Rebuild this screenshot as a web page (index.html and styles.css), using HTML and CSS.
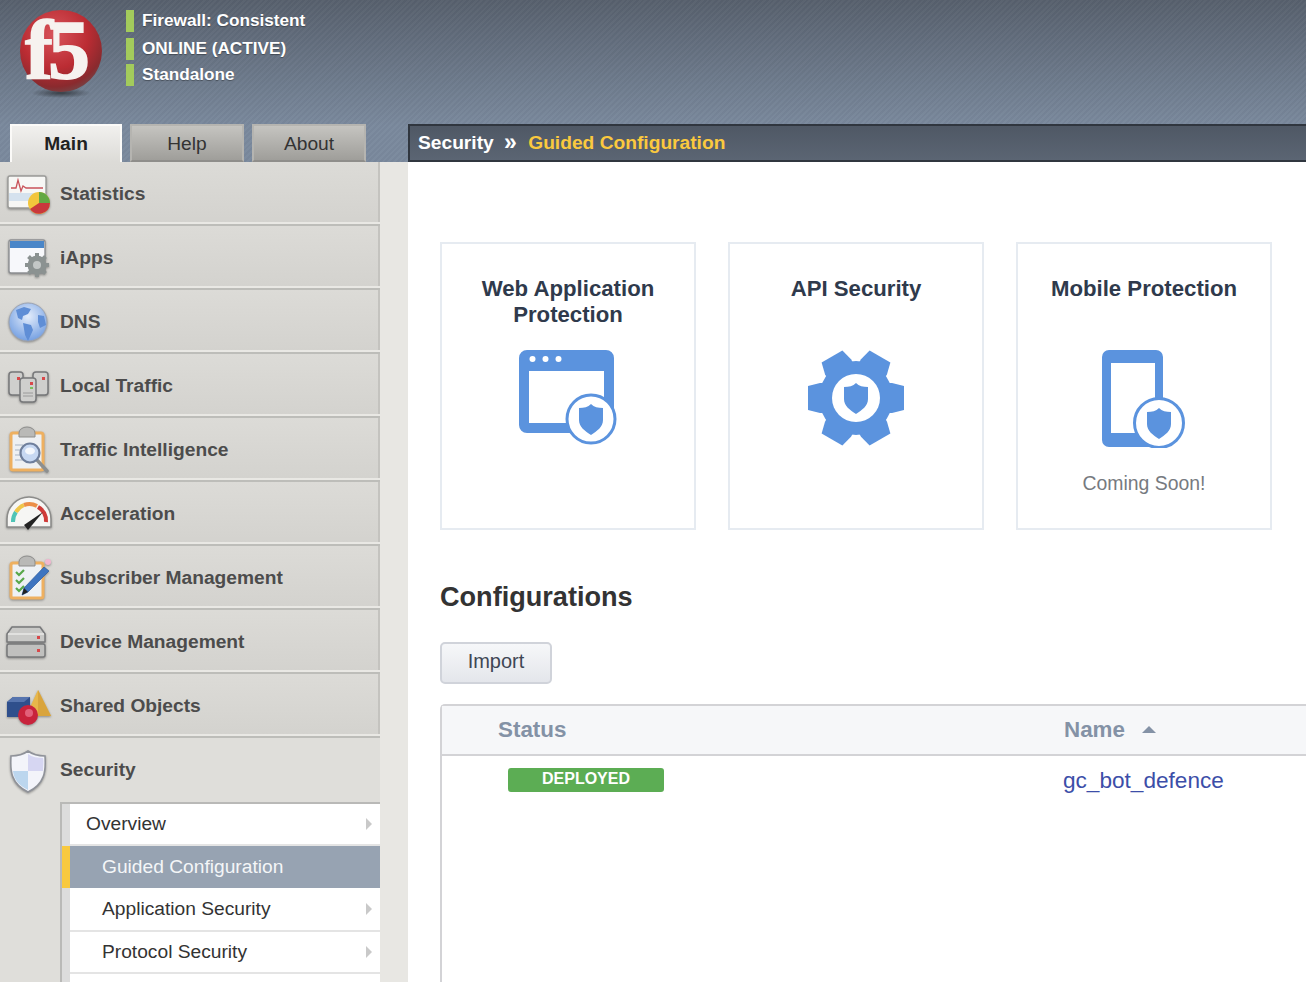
FILE: index.html
```html
<!DOCTYPE html>
<html lang="en">
<head>
    <meta charset="UTF-8">
    <title>Guided Configuration</title>
    <link rel="stylesheet" href="styles.css">
</head>
<body>
<div class="page">
    <header class="header">
        <div class="banner">
            <svg class="logo" width="90" height="106" viewBox="0 -8 90 106">
                <defs>
                    <radialGradient id="ball" cx="42%" cy="30%" r="75%">
                        <stop offset="0" stop-color="#d8545b"/>
                        <stop offset="0.55" stop-color="#bb2c33"/>
                        <stop offset="0.85" stop-color="#8a2a2e"/>
                        <stop offset="1" stop-color="#70494b"/>
                    </radialGradient>
                    <radialGradient id="logoShadow">
                        <stop offset="0" stop-color="#2a2e33" stop-opacity=".8"/>
                        <stop offset="1" stop-color="#2a2e33" stop-opacity="0"/>
                    </radialGradient>
                </defs>
                <ellipse cx="41" cy="83" rx="30" ry="5" fill="url(#logoShadow)"/>
                <circle cx="41" cy="41" r="41" fill="url(#ball)"/>
                <text class="logo-text" x="5" y="69">f5</text>
            </svg>
            <ul class="status">
                <li class="status-row">Firewall: Consistent</li>
                <li class="status-row status-mid">ONLINE (ACTIVE)</li>
                <li class="status-row">Standalone</li>
            </ul>
        </div>
        <div class="tabbar">
            <nav class="tabs">
                <a class="tab tab-on">Main</a>
                <a class="tab">Help</a>
                <a class="tab">About</a>
            </nav>
            <div class="crumbs">
                <span>Security</span>
                <span class="crumb-sep">»</span>
                <span class="crumb-now">Guided Configuration</span>
            </div>
        </div>
    </header>

    <div class="main">
        <aside class="sidebar">
            <a class="nav-row">
                <svg class="nav-icon" viewBox="0 0 50 50">
                    <rect x="6" y="7" width="38" height="32" rx="2" fill="#f7f7f5" stroke="#9a9a98" stroke-width="1.4"/>
                    <rect x="7" y="24" width="36" height="8" fill="#d5e2ee"/>
                    <path d="M9 19h5l2-8 3 11 2-5 3 2h17" fill="none" stroke="#c9535a" stroke-width="1.3"/>
                    <circle cx="37" cy="34" r="11" fill="#f2c53c"/>
                    <path d="M37 34V23a11 11 0 0 1 11 11z" fill="#63a844"/>
                    <path d="M37 34h11a11 11 0 0 1-20 6z" fill="#c9383c"/>
                </svg>
                Statistics
            </a>
            <a class="nav-row">
                <svg class="nav-icon" viewBox="0 0 50 50">
                    <rect x="7" y="7" width="36" height="33" rx="2" fill="#f7f8fb" stroke="#8d8f92" stroke-width="1.4"/>
                    <rect x="8" y="8" width="34" height="7" fill="#4a86c8"/>
                    <g fill="#8b9291">
                        <circle cx="35" cy="32" r="9.5"/>
                        <path d="M33 20h4v4h-4zM33 40h4v4h-4zM23 30h4v4h-4zM43 30h4v4h-4z"/>
                        <path d="M33 20h4v4h-4zM33 40h4v4h-4zM23 30h4v4h-4zM43 30h4v4h-4z" transform="rotate(45 35 32)"/>
                    </g>
                    <circle cx="35" cy="32" r="4" fill="#c3c7c6"/>
                </svg>
                iApps
            </a>
            <a class="nav-row">
                <svg class="nav-icon" viewBox="0 0 50 50">
                    <defs>
                        <radialGradient id="sea" cx="50%" cy="35%" r="70%">
                            <stop offset="0" stop-color="#e4edfb"/>
                            <stop offset="1" stop-color="#6c9ae0"/>
                        </radialGradient>
                    </defs>
                    <circle cx="26" cy="25" r="19" fill="url(#sea)" stroke="#9aa3b4"/>
                    <path d="M14 13l8-3 7 2-3 5-5 2-1 4-4-2zM21 26l8 2 2 5-5 11-3-6zM36 18l6 1 2 9-6 3-2-6z" fill="#5f8ed6"/>
                </svg>
                DNS
            </a>
            <a class="nav-row">
                <svg class="nav-icon" viewBox="0 0 50 50">
                    <g fill="#cfcfcd" stroke="#77787a" stroke-width="1.5">
                        <rect x="7" y="11" width="14" height="23" rx="3"/>
                        <rect x="31" y="11" width="15" height="23" rx="3"/>
                        <rect x="18" y="17" width="16" height="24" rx="3"/>
                    </g>
                    <rect x="15" y="16" width="3" height="3" fill="#d8484a"/>
                    <rect x="40" y="16" width="3" height="3" fill="#d8484a"/>
                    <rect x="28" y="21" width="3" height="3" fill="#d8484a"/>
                    <rect x="28" y="26" width="3" height="2" fill="#7cc05c"/>
                    <path d="M21 32h10M21 35h10" stroke="#9a9a9a"/>
                </svg>
                Local Traffic
            </a>
            <a class="nav-row">
                <svg class="nav-icon" viewBox="0 0 50 50">
                    <rect x="9" y="8" width="32" height="37" rx="2" fill="#eef0f2" stroke="#eeb060" stroke-width="3"/>
                    <path d="M17 8a8 6 0 0 1 16 0v4H17z" fill="#b9b9b7" stroke="#8d8d8b"/>
                    <path d="M13 20h8M13 25h6M13 30h6M13 35h7" stroke="#a8b4c4"/>
                    <path d="M35 35l10 11" stroke="#8c8f90" stroke-width="3.4" stroke-linecap="round"/>
                    <circle cx="28" cy="28" r="9.5" fill="#c7d8f2" stroke="#6f7f9c" stroke-width="2.2"/>
                    <ellipse cx="28" cy="26" rx="5" ry="3.5" fill="#f4f7fc"/>
                </svg>
                Traffic Intelligence
            </a>
            <a class="nav-row">
                <svg class="nav-icon" viewBox="0 0 50 50">
                    <path d="M5 38v-8a22 22 0 0 1 44 0v8z" fill="#f6f6f4" stroke="#8c8c8a" stroke-width="1.6" stroke-linejoin="round"/>
                    <path d="M11 33a16 16 0 0 1 3-10" fill="none" stroke="#4fc4b6" stroke-width="4"/>
                    <path d="M14 23a16 16 0 0 1 8-7" fill="none" stroke="#efc64a" stroke-width="4"/>
                    <path d="M22 16a16 16 0 0 1 13 1" fill="none" stroke="#ec8f48" stroke-width="4"/>
                    <path d="M36 18a16 16 0 0 1 8 15" fill="none" stroke="#cf3a38" stroke-width="4"/>
                    <path d="M22 36l19-13-15 18z" fill="#222"/>
                </svg>
                Acceleration
            </a>
            <a class="nav-row">
                <svg class="nav-icon" viewBox="0 0 50 50">
                    <rect x="9" y="10" width="32" height="35" rx="2" fill="#eef1f4" stroke="#eeb060" stroke-width="3"/>
                    <path d="M17 9a8 6 0 0 1 16 0v4H17z" fill="#b9b9b7" stroke="#8d8d8b"/>
                    <path d="M14 19l3 3 5-5M14 27l3 3 5-5M14 35l3 3 5-5" fill="none" stroke="#58a84a" stroke-width="2.2"/>
                    <path d="M20 42l2-7 20-21 5 4-21 21z" fill="#3d74c0" stroke="#2b5a9c" stroke-width=".7"/>
                    <path d="M20 42l2-7 4 4z" fill="#222"/>
                    <circle cx="46" cy="9" r="3" fill="#f0b8d0"/>
                </svg>
                Subscriber Management
            </a>
            <a class="nav-row">
                <svg class="nav-icon" viewBox="0 0 50 50">
                    <path d="M5 17l5-7h28l5 7v8H5z" fill="#c9c9c7" stroke="#77787a" stroke-width="1.5" stroke-linejoin="round"/>
                    <path d="M6 17h36" stroke="#e9e9e7" stroke-width="1.4"/>
                    <rect x="5" y="27" width="38" height="13" rx="2" fill="#c0c0be" stroke="#77787a" stroke-width="1.5"/>
                    <rect x="35" y="19" width="3" height="3" fill="#d8484a"/>
                    <rect x="35" y="32" width="3" height="3" fill="#d8484a"/>
                </svg>
                Device Management
            </a>
            <a class="nav-row">
                <svg class="nav-icon" viewBox="0 0 50 50">
                    <path d="M36 9l13 26H24z" fill="#e8b74a"/>
                    <path d="M36 9l13 26H36z" fill="#d9a43c"/>
                    <path d="M5 21l6-5h17v15l-6 5H5z" fill="#2f4f8c"/>
                    <path d="M5 21l6-5h17l-6 5z" fill="#5674ae"/>
                    <circle cx="26" cy="34" r="10" fill="#c8233c"/>
                    <circle cx="27" cy="32" r="4" fill="#e2607a"/>
                </svg>
                Shared Objects
            </a>
            <a class="nav-row nav-open">
                <svg class="nav-icon" viewBox="0 0 50 50">
                    <path d="M26 6c4 3 10 5 17 5 1 15 0 28-17 36C9 39 8 26 9 11c7 0 13-2 17-5z" fill="#f3f4fa" stroke="#8f9299" stroke-width="1.6"/>
                    <path d="M26 9v17H11c1 8 5 14 15 19z" fill="#bcd6ee"/>
                    <path d="M26 26h15c0-5 1-9 0-13-5 0-11-1-15-4z" fill="#d6d6f2"/>
                </svg>
                Security
            </a>
            <ul class="subnav">
                <li class="sub-item sub-top">Overview</li>
                <li class="sub-item sub-child sub-on">Guided Configuration</li>
                <li class="sub-item sub-child sub-tall">Application Security</li>
                <li class="sub-item sub-child">Protocol Security</li>
            </ul>
        </aside>

        <main class="content">
            <section class="cards">
                <div class="card">
                    <h3 class="card-title">Web Application Protection</h3>
                    <svg class="card-icon" width="100" height="98" viewBox="0 0 100 98">
                        <path fill-rule="evenodd" d="M8 0h79a8 8 0 0 1 8 8v67a8 8 0 0 1-8 8H8a8 8 0 0 1-8-8V8a8 8 0 0 1 8-8zM10 21v52h75V21z" fill="#5b93de"/>
                        <g fill="#fff">
                            <circle cx="13.500" cy="9" r="3"/>
                            <circle cx="26.500" cy="9" r="3"/>
                            <circle cx="39.500" cy="9" r="3"/>
                        </g>
                        <circle cx="72" cy="69" r="24" fill="#fff" stroke="#5b93de" stroke-width="3"/>
                        <path transform="translate(72 69)" d="M0-15c3 3 7 4 12 4V1C12 8 6 12 0 16-6 12-12 8-12 1v-12c5 0 9-1 12-4z" fill="#5b93de"/>
                    </svg>
                </div>
                <div class="card">
                    <h3 class="card-title">API Security</h3>
                    <svg class="card-icon card-icon-low" width="96" height="96" viewBox="-48 -48 96 96">
                        <circle r="37" fill="#5b93de"/>
                        <g fill="#5b93de">
                            <path d="M-48-12l12-3H36l12 3v24l-12 3H-36l-12-3z"/>
                            <path d="M-48-12l12-3H36l12 3v24l-12 3H-36l-12-3z" transform="rotate(60)"/>
                            <path d="M-48-12l12-3H36l12 3v24l-12 3H-36l-12-3z" transform="rotate(120)"/>
                        </g>
                        <circle r="24" fill="#fff"/>
                        <path d="M0-15c3 3 7 4 12 4V1C12 8 6 12 0 16-6 12-12 8-12 1v-12c5 0 9-1 12-4z" fill="#5b93de"/>
                    </svg>
                </div>
                <div class="card">
                    <h3 class="card-title">Mobile Protection</h3>
                    <svg class="card-icon card-icon-low card-icon-phone" width="84" height="98" viewBox="0 0 84 98">
                        <path fill-rule="evenodd" d="M7 0h47a7 7 0 0 1 7 7v83a7 7 0 0 1-7 7H7a7 7 0 0 1-7-7V7a7 7 0 0 1 7-7zM9 13v70h44V13z" fill="#5b93de"/>
                        <circle cx="57" cy="73" r="24.500" fill="#fff" stroke="#5b93de" stroke-width="3"/>
                        <path transform="translate(57 73)" d="M0-15c3 3 7 4 12 4V1C12 8 6 12 0 16-6 12-12 8-12 1v-12c5 0 9-1 12-4z" fill="#5b93de"/>
                    </svg>
                    <p class="card-note">Coming Soon!</p>
                </div>
            </section>

            <h2 class="section-title">Configurations</h2>
            <button class="btn">Import</button>

            <div class="table">
                <div class="table-head">
                    <div class="col-status">Status</div>
                    <div class="col-name">Name <span class="sort-up"></span></div>
                </div>
                <div class="table-row">
                    <div class="col-status"><span class="badge">DEPLOYED</span></div>
                    <div class="col-name"><a class="link">gc_bot_defence</a></div>
                </div>
            </div>
        </main>
    </div>
</div>
</body>
</html>
```

FILE: styles.css
```css
html, body {
    margin: 0;
    height: 100%;
    overflow: hidden;
}

body {
    font-family: "Liberation Sans", Arial, sans-serif;
    background: #fff;
    color: #333;
}

ul {
    list-style: none;
    margin: 0;
    padding: 0;
}

.page {
    height: 100vh;
    display: flex;
    flex-direction: column;
}

/* header */
.header {
    height: 162px;
    flex: none;
    background:
        repeating-linear-gradient(135deg, rgba(255,255,255,0.025) 0 2px, rgba(0,0,0,0.018) 2px 4px),
        linear-gradient(#57606d, #7a899d 78%, #7a899d);
}

.banner {
    height: 124px;
    box-sizing: border-box;
    padding: 10px 0 0 20px;
    display: flex;
}

.logo {
    flex: none;
    margin: -8px 16px 0 0;
}

.logo-text {
    font-family: "Liberation Serif", serif;
    font-size: 84px;
    font-weight: bold;
    letter-spacing: -5px;
    fill: #f6f2ef;
    stroke: #f6f2ef;
    stroke-width: 1.5px;
}

.status-row {
    height: 22px;
    line-height: 20px;
    margin-bottom: 6px;
    padding-left: 8px;
    border-left: 8px solid #a3cb5c;
    font-size: 17.2px;
    font-weight: bold;
    color: #fff;
    text-shadow: 0 1px 1px rgba(0,0,0,0.35);
}

.status-mid {
    margin-bottom: 4px;
}

.tabbar {
    height: 38px;
    display: flex;
}

.tabs {
    width: 408px;
    flex: none;
    box-sizing: border-box;
    padding-left: 10px;
    display: flex;
    gap: 8px;
}

.tab {
    width: 114px;
    box-sizing: border-box;
    border: 2px solid #b5b4b0;
    border-bottom: 2px solid #8f8e8b;
    background: linear-gradient(#c5c4c0, #9f9e9a);
    color: #333;
    font-size: 19.2px;
    line-height: 35px;
    text-align: center;
}

.tab-on {
    width: 112px;
    border-color: #fbfaf8;
    border-bottom: 0;
    background: linear-gradient(#f1f0ee, #dcdbd7);
    color: #222;
    font-weight: bold;
}

.crumbs {
    flex: 1;
    box-sizing: border-box;
    border: 2px solid #30363f;
    border-right: 0;
    padding-left: 8px;
    background: linear-gradient(#4f5865, #5b6573);
    color: #fff;
    font-size: 19.2px;
    font-weight: bold;
    line-height: 34px;
}

.crumb-sep {
    margin: 0 6px 0 5px;
    font-size: 23px;
    line-height: 20px;
    vertical-align: -1px;
}

.crumb-now {
    color: #fbc93e;
}

/* sidebar */
.main {
    flex: 1;
    min-height: 0;
    display: flex;
}

.sidebar {
    width: 380px;
    flex: none;
    display: flex;
    flex-direction: column;
    background: #dfdeda;
}

.nav-row {
    height: 64px;
    flex: none;
    box-sizing: border-box;
    padding: 0 0 1px 2px;
    display: flex;
    align-items: center;
    gap: 8px;
    background: linear-gradient(#dcdbd7, #d3d2ce);
    box-shadow: inset 0 -2px #bdbdb9, inset 0 -4px #e9e8e4, inset -2px 0 #c4c3bf;
    color: #4c4c4c;
    font-size: 19.2px;
    font-weight: bold;
}

.nav-icon {
    width: 50px;
    height: 50px;
    flex: none;
    filter: drop-shadow(0 1px 1px rgba(0,0,0,0.35));
}

.nav-open {
    background: #dfdeda;
    box-shadow: none;
}

.subnav {
    flex: 1;
    margin-left: 60px;
    border-top: 2px solid #b9b9b7;
    border-left: 2px solid #b9b9b7;
    padding-left: 8px;
    background: linear-gradient(#dcdcdc, #dcdcdc) left / 8px 100% no-repeat #fff;
    background-origin: border-box;
    background-position: 2px 0;
}

.sub-item {
    height: 42px;
    box-sizing: border-box;
    border-bottom: 2px solid #e4e4e4;
    padding-left: 16px;
    display: flex;
    align-items: center;
    font-size: 19.2px;
    color: #333;
}

.sub-item::after {
    content: "";
    margin-left: auto;
    margin-right: 8px;
    border-left: 6px solid #c9c9c9;
    border-top: 6px solid transparent;
    border-bottom: 6px solid transparent;
}

.sub-child {
    padding-left: 32px;
}

.sub-tall {
    height: 44px;
}

.sub-on {
    position: relative;
    background: #97a3b2;
    border-bottom: 0;
    color: #f4f6f8;
}

.sub-on::after {
    display: none;
}

.sub-on::before {
    content: "";
    position: absolute;
    left: -8px;
    top: 0;
    bottom: 0;
    width: 8px;
    background: #f8c93f;
}

/* content */
.content {
    flex: 1;
    min-width: 0;
    display: flex;
    flex-direction: column;
    border-left: 28px solid #e8e7e3;
    padding: 80px 0 0 32px;
}

.cards {
    flex: none;
    display: flex;
    gap: 32px;
}

.card {
    width: 256px;
    height: 288px;
    box-sizing: border-box;
    border: 2px solid #e6ebf1;
    padding: 32px 30px 0;
    text-align: center;
}

.card-title {
    height: 52px;
    margin: 0;
    font-size: 22.2px;
    line-height: 26px;
    font-weight: bold;
    color: #2f3a4c;
}

.card-icon {
    display: block;
    margin: 22px 0 0 47px;
}

.card-icon-low {
    margin-left: 48px;
}

.card-icon-phone {
    margin-left: 54px;
}

.card-note {
    margin: 24px 0 0;
    font-size: 19.4px;
    color: #767a80;
}

.section-title {
    margin: 50px 0 28px;
    font-size: 27.1px;
    line-height: 34px;
    font-weight: bold;
    color: #333;
}

.btn {
    display: block;
    flex: none;
    width: 112px;
    height: 42px;
    padding: 0 0 3px;
    border: 2px solid #d0d3da;
    border-radius: 5px;
    background: linear-gradient(#f6f7f9, #e4e6eb);
    font-family: inherit;
    font-size: 20px;
    color: #3f4755;
}

.table {
    flex: 1;
    margin-top: 20px;
    border: 2px solid #d3d3d6;
    border-right: 0;
    border-bottom: 0;
    border-top-left-radius: 5px;
}

.table-head, .table-row {
    display: flex;
}

.table-head {
    height: 48px;
    align-items: center;
    border-bottom: 2px solid #d3d3d6;
    background: #f6f7f9;
    font-size: 22.4px;
    font-weight: bold;
    color: #8492a6;
}

.col-status {
    width: 622px;
    flex: none;
    padding-left: 56px;
    box-sizing: border-box;
}

.sort-up {
    display: inline-block;
    margin-left: 11px;
    vertical-align: 4px;
    border-left: 7px solid transparent;
    border-right: 7px solid transparent;
    border-bottom: 7px solid #8492a6;
}

.table-row {
    padding-top: 12px;
    font-size: 22.6px;
}

.table-row .col-status {
    padding-left: 66px;
}

.badge {
    display: block;
    width: 156px;
    height: 24px;
    border-radius: 3px;
    background: #5cad54;
    color: #fff;
    font-size: 16px;
    font-weight: bold;
    line-height: 21px;
    text-align: center;
}

.link {
    margin-left: -1px;
    color: #3c4ea8;
}
```
